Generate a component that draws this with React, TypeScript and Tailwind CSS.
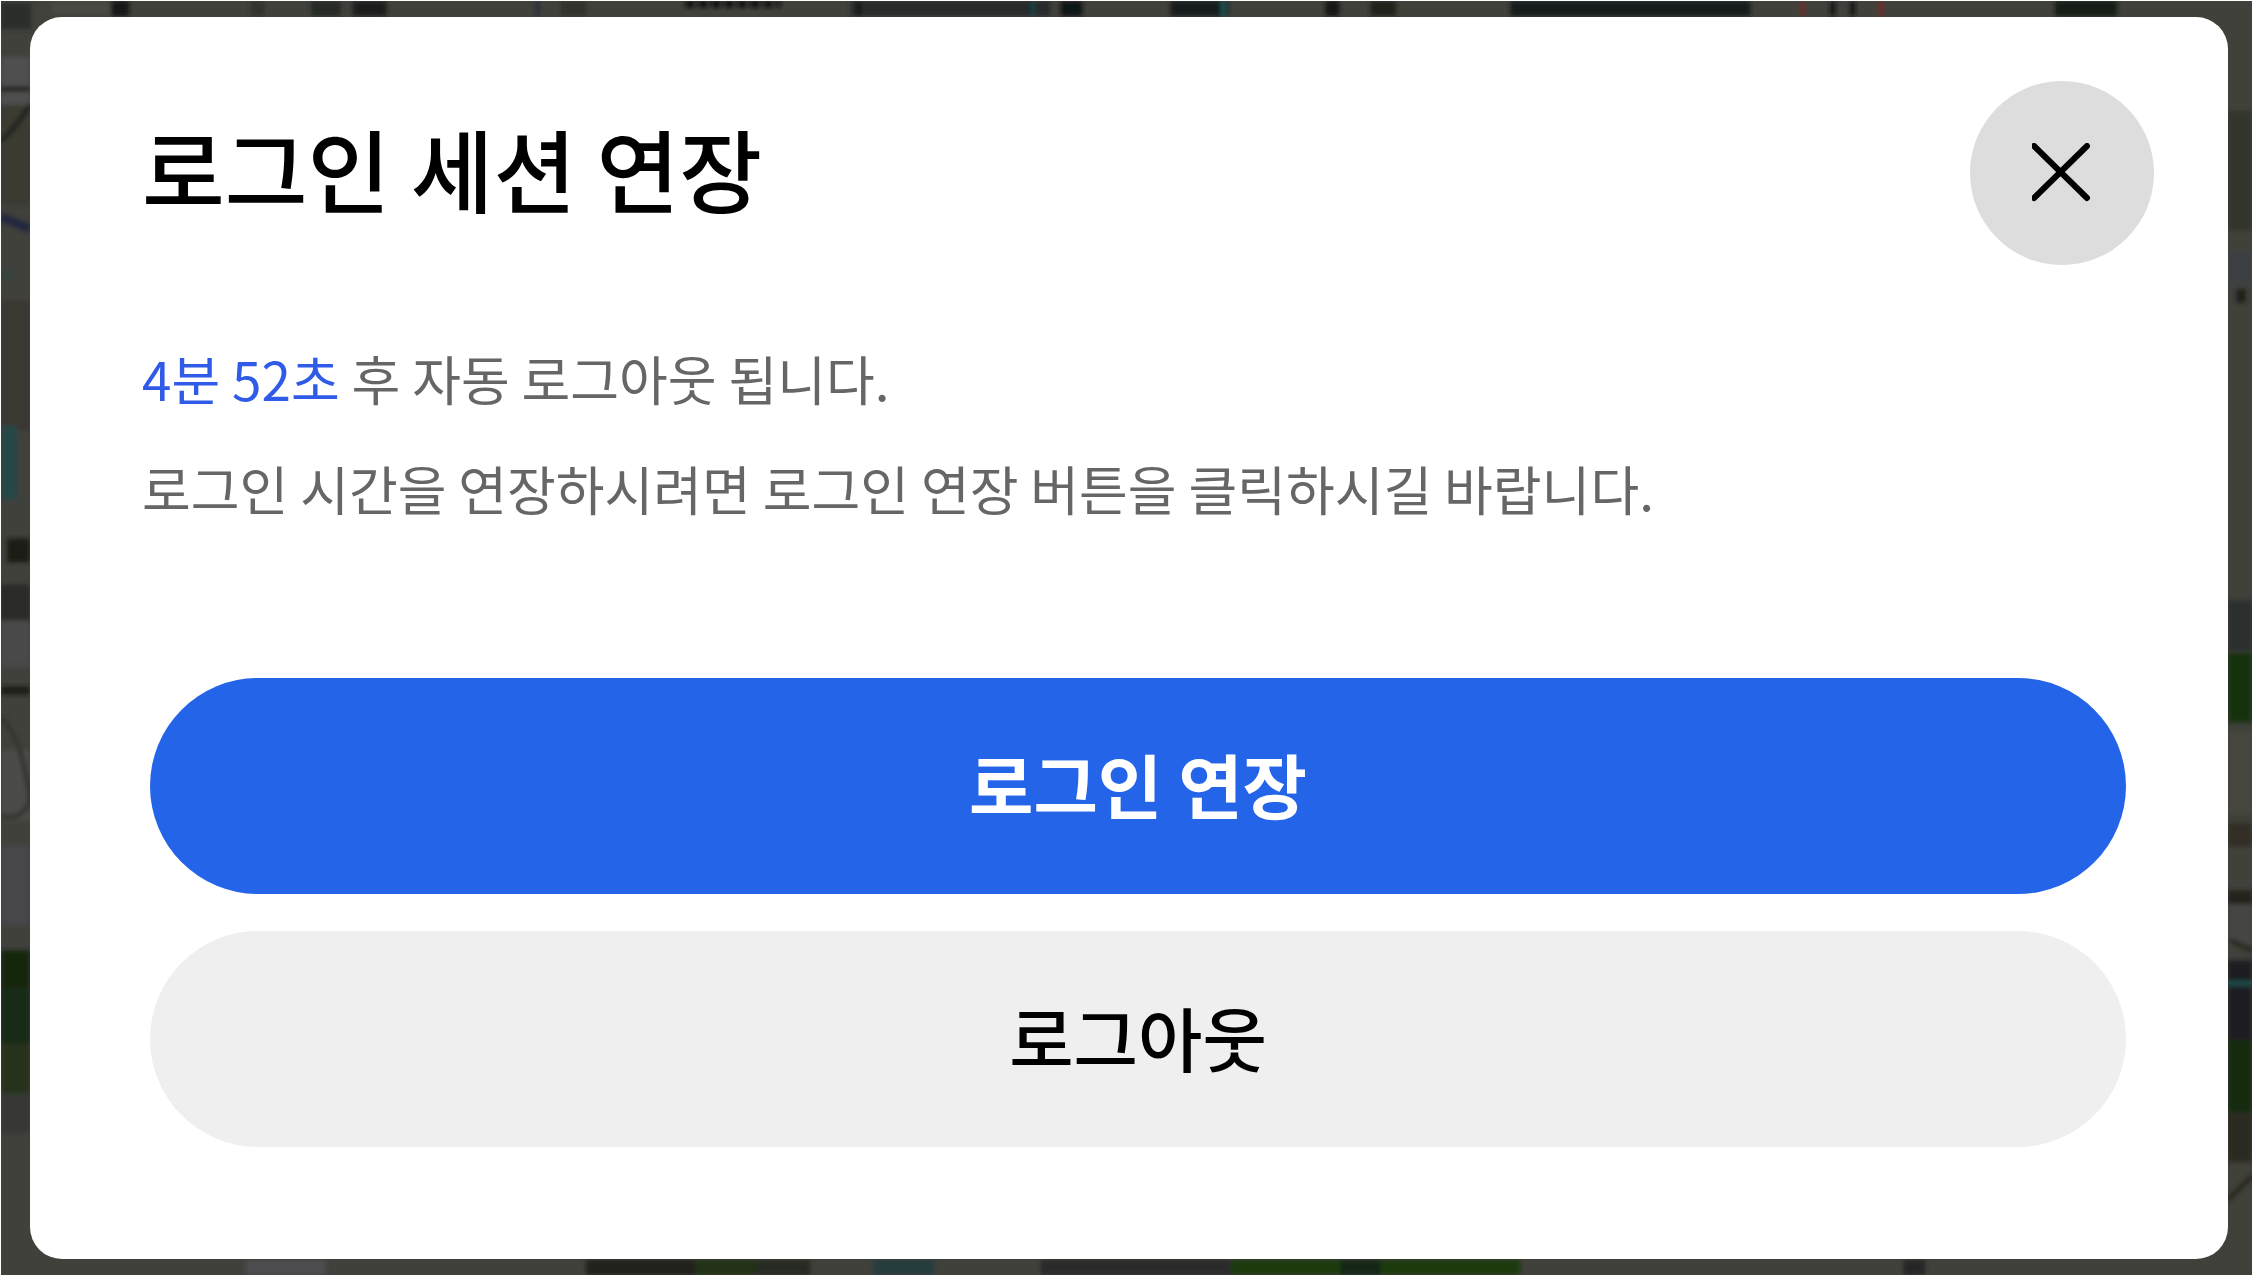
type Patch = { x: number; y: number; w: number; h: number; color: string }

// Dimmed aerial photo behind the dialog, reduced to its visible blocks
const PATCHES: Patch[] = [
  // top
  { x: 0, y: 2, w: 30, h: 26, color: '#2b2e2a' },
  { x: 50, y: 0, w: 60, h: 14, color: '#474842' },
  { x: 110, y: 0, w: 18, h: 15, color: '#171915' },
  { x: 250, y: 0, w: 14, h: 15, color: '#30332d' },
  { x: 310, y: 0, w: 30, h: 15, color: '#252a25' },
  { x: 352, y: 0, w: 34, h: 15, color: '#1c1f1b' },
  { x: 534, y: 0, w: 5, h: 15, color: '#2c3042' },
  { x: 560, y: 0, w: 26, h: 15, color: '#30332d' },
  { x: 850, y: 0, w: 200, h: 15, color: '#252c2a' },
  { x: 856, y: 0, w: 4, h: 15, color: '#0c0e0c' },
  { x: 1030, y: 0, w: 5, h: 15, color: '#18403f' },
  { x: 1060, y: 0, w: 22, h: 15, color: '#111412' },
  { x: 1170, y: 0, w: 58, h: 15, color: '#141c1b' },
  { x: 1220, y: 0, w: 6, h: 15, color: '#1c4e4d' },
  { x: 1325, y: 0, w: 14, h: 15, color: '#171915' },
  { x: 1370, y: 0, w: 26, h: 15, color: '#20231f' },
  { x: 1510, y: 0, w: 240, h: 15, color: '#181c1a' },
  { x: 1800, y: 0, w: 5, h: 15, color: '#6b2f2a' },
  { x: 1830, y: 0, w: 5, h: 15, color: '#141612' },
  { x: 1850, y: 0, w: 5, h: 15, color: '#141612' },
  { x: 1878, y: 0, w: 6, h: 15, color: '#6b2f2a' },
  { x: 2055, y: 0, w: 62, h: 15, color: '#171b19' },
  // left
  { x: 0, y: 56, w: 29, h: 48, color: '#4f4f4f' },
  { x: 0, y: 104, w: 29, h: 100, color: '#3a3a33' },
  { x: 0, y: 268, w: 10, h: 12, color: '#35443e' },
  { x: 0, y: 300, w: 29, h: 130, color: '#3b3831' },
  { x: 0, y: 425, w: 16, h: 74, color: '#264747' },
  { x: 6, y: 538, w: 23, h: 24, color: '#1d1c19' },
  { x: 0, y: 584, w: 29, h: 36, color: '#2a2a27' },
  { x: 0, y: 620, w: 29, h: 46, color: '#484849' },
  { x: 0, y: 686, w: 29, h: 8, color: '#1b1a16' },
  { x: 0, y: 750, w: 29, h: 70, color: '#4c4c4a' },
  { x: 0, y: 845, w: 29, h: 80, color: '#464649' },
  { x: 0, y: 950, w: 29, h: 38, color: '#152511' },
  { x: 0, y: 988, w: 29, h: 55, color: '#172b12' },
  { x: 0, y: 1043, w: 29, h: 50, color: '#25301f' },
  { x: 0, y: 1093, w: 29, h: 40, color: '#363834' },
  // right
  { x: 2228, y: 110, w: 24, h: 120, color: '#33342f' },
  { x: 2228, y: 250, w: 24, h: 36, color: '#3e4043' },
  { x: 2236, y: 288, w: 10, h: 14, color: '#20221e' },
  { x: 2228, y: 600, w: 24, h: 50, color: '#2b2e2d' },
  { x: 2228, y: 652, w: 24, h: 70, color: '#17300f' },
  { x: 2228, y: 732, w: 24, h: 80, color: '#47473f' },
  { x: 2228, y: 822, w: 24, h: 24, color: '#332f25' },
  { x: 2228, y: 890, w: 24, h: 14, color: '#25241e' },
  { x: 2228, y: 904, w: 24, h: 40, color: '#454543' },
  { x: 2228, y: 960, w: 24, h: 80, color: '#1c1f21' },
  { x: 2228, y: 980, w: 24, h: 6, color: '#1f4a47' },
  { x: 2228, y: 1040, w: 24, h: 72, color: '#152b10' },
  { x: 2228, y: 1112, w: 24, h: 50, color: '#2b2a20' },
  // bottom
  { x: 245, y: 1260, w: 80, h: 15, color: '#4e4d4f' },
  { x: 585, y: 1260, w: 110, h: 15, color: '#20201e' },
  { x: 695, y: 1260, w: 60, h: 15, color: '#223019' },
  { x: 755, y: 1260, w: 55, h: 15, color: '#272b22' },
  { x: 872, y: 1260, w: 62, h: 15, color: '#283c3d' },
  { x: 1040, y: 1260, w: 190, h: 15, color: '#2b2a29' },
  { x: 1230, y: 1260, w: 290, h: 15, color: '#1a3a10' },
  { x: 1340, y: 1260, w: 40, h: 15, color: '#192613' },
  { x: 1903, y: 1260, w: 22, h: 15, color: '#272725' },
]

function Backdrop() {
  return (
    <svg
      className="absolute inset-0 h-full w-full"
      viewBox="0 0 2252 1275"
      preserveAspectRatio="none"
      aria-hidden="true"
    >
      <defs>
        <filter id="soften" x="0" y="0" width="100%" height="100%">
          <feGaussianBlur stdDeviation="2" />
        </filter>
      </defs>
      <rect width="2252" height="1275" fill="#41413c" />
      <g filter="url(#soften)">
        {PATCHES.map(p => (
          <rect key={`${p.x}-${p.y}`} x={p.x} y={p.y} width={p.w} height={p.h} fill={p.color} />
        ))}
        <g fill="none" strokeWidth="5">
          <path d="M685 3 H780" stroke="#0c0e0b" strokeWidth="7" strokeDasharray="9 4" />
          <path d="M0 216 L29 228" stroke="#23283c" strokeWidth="9" />
          <path d="M0 88 L29 88 M0 140 Q14 128 29 104" stroke="#22231e" />
          <path d="M0 718 Q20 732 29 800 Q20 822 0 815" stroke="#35352f" />
          <path d="M2230 940 L2252 950 M2228 1200 L2252 1176" stroke="#292821" />
        </g>
      </g>
    </svg>
  )
}

function CloseIcon() {
  return (
    <svg className="size-[60px]" viewBox="0 0 60 60" fill="none" aria-hidden="true">
      <path d="M2 3 L55 55 M55 3 L2 55" stroke="#000" strokeWidth="6" strokeLinecap="round" />
    </svg>
  )
}

function SessionDialog({ minutes, seconds }: { minutes: number; seconds: number }) {
  return (
    <section
      role="dialog"
      aria-modal="true"
      aria-labelledby="session-title"
      className="relative rounded-[32px] bg-white pt-16 pr-[74px] pb-28 pl-28"
    >
      <header className="flex items-start justify-between">
        <h1 id="session-title" className="text-[90px] leading-[172px] font-medium">
          로그인 세션 연장
        </h1>
        <button
          type="button"
          aria-label="닫기"
          className="flex size-[184px] shrink-0 cursor-pointer items-center justify-center rounded-full bg-[#ddd]"
        >
          <CloseIcon />
        </button>
      </header>

      <div className="mt-[58px] text-[53px] leading-[110px] text-[#666]">
        <p>
          <span className="text-[#2f5be8]">
            {minutes}분 {seconds}초
          </span>{' '}
          후 자동 로그아웃 됩니다.
        </p>
        <p>로그인 시간을 연장하시려면 로그인 연장 버튼을 클릭하시길 바랍니다.</p>
      </div>

      <div className="mt-[135px] mr-7 ml-2 flex flex-col gap-[37px] text-[70px]">
        <button
          type="button"
          className="h-[216px] cursor-pointer rounded-full bg-[#2464e8] pb-1.5 font-bold text-white"
        >
          로그인 연장
        </button>
        <button
          type="button"
          className="h-[216px] cursor-pointer rounded-full bg-[#efefef] pb-1.5 font-medium"
        >
          로그아웃
        </button>
      </div>
    </section>
  )
}

export default function App() {
  return (
    <main className="relative min-h-screen border-l border-t border-white pt-4 pr-6 pb-4 pl-[29px] font-['Noto_Sans_CJK_KR',sans-serif] text-black">
      <Backdrop />
      <SessionDialog minutes={4} seconds={52} />
    </main>
  )
}
